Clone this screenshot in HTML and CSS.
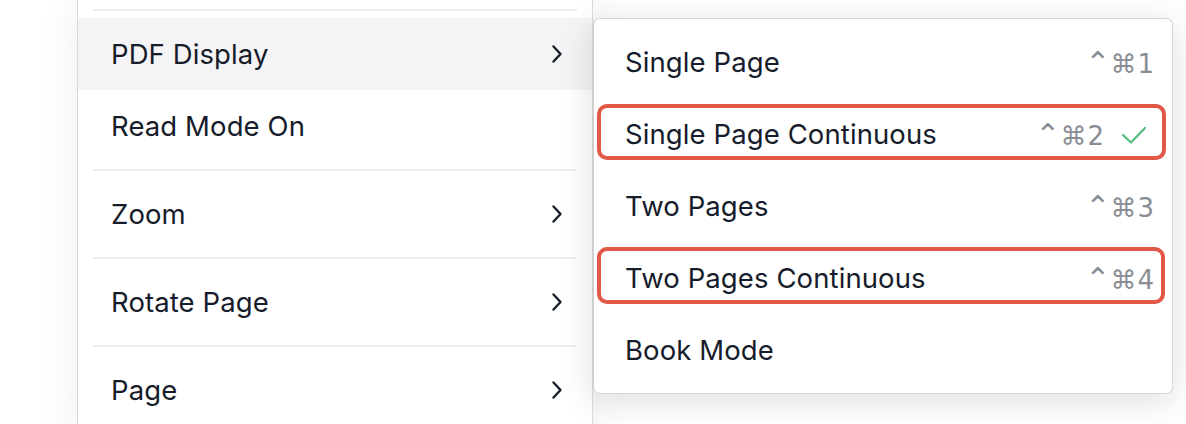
FILE: index.html
```html
<!DOCTYPE html>
<html lang="en">
<head>
<meta charset="utf-8">
<title>PDF Display menu</title>
<link rel="stylesheet" href="styles.css">
</head>
<body>
<div class="stage">
  <div class="menu">
    <div class="divider first"></div>
    <div class="item active"><span class="label">PDF Display</span><svg class="chev" viewBox="0 0 12 20" width="12" height="20"><path d="M2.5 2.5 L9.5 10 L2.5 17.5" /></svg></div>
    <div class="item"><span class="label">Read Mode On</span></div>
    <div class="divider"></div>
    <div class="item"><span class="label">Zoom</span><svg class="chev" viewBox="0 0 12 20" width="12" height="20"><path d="M2.5 2.5 L9.5 10 L2.5 17.5" /></svg></div>
    <div class="divider"></div>
    <div class="item"><span class="label">Rotate Page</span><svg class="chev" viewBox="0 0 12 20" width="12" height="20"><path d="M2.5 2.5 L9.5 10 L2.5 17.5" /></svg></div>
    <div class="divider"></div>
    <div class="item"><span class="label">Page</span><svg class="chev" viewBox="0 0 12 20" width="12" height="20"><path d="M2.5 2.5 L9.5 10 L2.5 17.5" /></svg></div>
  </div>
  <div class="submenu">
    <div class="sub-item"><span class="label">Single Page</span><span class="keys"><span class="ctrl">⌃</span>⌘1</span></div>
    <div class="sub-item marked mark-a"><span class="label">Single Page Continuous</span><span class="keys"><span class="ctrl">⌃</span>⌘2</span><svg class="check" viewBox="0 0 26 20" width="26" height="20"><path d="M2 10 L10 17.5 L24 3" /></svg></div>
    <div class="sub-item"><span class="label">Two Pages</span><span class="keys"><span class="ctrl">⌃</span>⌘3</span></div>
    <div class="sub-item marked mark-b"><span class="label">Two Pages Continuous</span><span class="keys"><span class="ctrl">⌃</span>⌘4</span></div>
    <div class="sub-item"><span class="label">Book Mode</span></div>
  </div>
</div>
</body>
</html>
```

FILE: styles.css
```css
html, body {
  margin: 0;
  padding: 0;
  background: #ffffff;
  width: 1186px;
  height: 424px;
  overflow: hidden;
}

.stage {
  display: flex;
  align-items: flex-start;
  padding-left: 77px;
  height: 424px;
  font-family: Inter, "Noto Sans", "DejaVu Sans", sans-serif;
  color: #171c2b;
}

.menu {
  width: 514px;
  height: 440px;
  background: #ffffff;
  border-left: 1px solid #d8d8d8;
  border-right: 1px solid #dcdcdc;
  box-shadow: 0 0 40px rgba(0, 0, 0, 0.07);
  display: flex;
  flex-direction: column;
}

.divider {
  height: 2px;
  background: #eeeef0;
  margin: 7px 15px 7px 15px;
  flex: none;
}

.divider.first {
  margin-top: 9px;
}

.item {
  height: 72px;
  flex: none;
  display: flex;
  align-items: center;
  justify-content: space-between;
  padding: 0 29px 0 33px;
}

.item.active {
  background: #f4f4f6;
}

.label {
  font-size: 27.5px;
  letter-spacing: 0.1px;
  white-space: nowrap;
}

.chev path {
  fill: none;
  stroke: #171c2b;
  stroke-width: 2.4;
  stroke-linecap: round;
  stroke-linejoin: round;
}

.submenu {
  margin-top: 18px;
  width: 578px;
  background: #ffffff;
  border: 1px solid #d6d6d6;
  border-left-color: #cfcfcf;
  border-radius: 7px;
  box-shadow: 0 6px 34px rgba(0, 0, 0, 0.14);
  padding: 7px 0;
  display: flex;
  flex-direction: column;
}

.sub-item {
  position: relative;
  height: 72px;
  display: flex;
  align-items: center;
  padding: 0 17px 0 31px;
}

.sub-item .label {
  flex: 1;
}

.keys {
  font-family: "DejaVu Sans", Inter, sans-serif;
  font-size: 26px;
  color: #8a8d94;
  letter-spacing: 1px;
  white-space: nowrap;
}

.ctrl {
  font-size: 30px;
  letter-spacing: 0;
}

.check {
  margin-left: 16px;
  margin-right: 8px;
  margin-top: 2px;
}

.check path {
  fill: none;
  stroke: #56bd7c;
  stroke-width: 2.2;
  stroke-linecap: round;
  stroke-linejoin: round;
}

.marked::after {
  content: "";
  position: absolute;
  border: 4px solid #df5848;
  border-radius: 10px;
  pointer-events: none;
}

.mark-a::after {
  top: 6px;
  bottom: 10px;
  left: 3px;
  right: 6px;
}

.mark-b::after {
  top: 5px;
  bottom: 10px;
  left: 3px;
  right: 7px;
}
```
